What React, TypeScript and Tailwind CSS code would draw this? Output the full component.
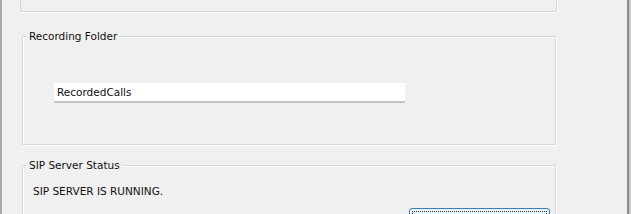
export default function App() {
  return (
    <div className="flex h-[214px] w-[631px] overflow-hidden bg-[#f0f0f0] text-[10.5px] leading-[13px] text-[#111111] [font-family:'DejaVu_Sans',sans-serif]">
      {/* window left edge */}
      <div className="w-[2px] shrink-0 bg-[#a9a9a9]" />

      <div className="flex-1 flex flex-col">
        {/* bottom of the group above */}
        <div className="ml-[18px] h-[12px] w-[537px] shrink-0 border-x border-b border-[#d8d8d8] shadow-[1px_1px_0_#ffffff]" />

        {/* Recording Folder */}
        <div className="relative ml-[20px] mt-[24px] h-[109px] w-[534px] shrink-0 border border-[#d8d8d8] shadow-[inset_1px_1px_0_#ffffff,1px_1px_0_#ffffff]">
          <span className="absolute left-[4px] top-[-7px] bg-[#f0f0f0] px-[2px]">Recording Folder</span>
          <div className="ml-[31px] mt-[46px] flex h-[20px] w-[351px] items-center border-b-2 border-[#c4c4c4] bg-white pl-[3px]">
            RecordedCalls
          </div>
        </div>

        {/* SIP Server Status */}
        <div className="relative ml-[20px] mt-[20px] h-[80px] w-[534px] shrink-0 border border-[#d8d8d8] shadow-[inset_1px_1px_0_#ffffff,1px_1px_0_#ffffff]">
          <span className="absolute left-[4px] top-[-7px] bg-[#f0f0f0] px-[2px]">SIP Server Status</span>
          <div className="ml-[10px] mt-[19px]">SIP SERVER IS RUNNING.</div>
          <div className="ml-[386px] mt-[10px] h-[23px] w-[141px] rounded-[3px] border border-[#3c7fb1] bg-gradient-to-b from-[#eaf6fd] to-[#d9f0fc] p-[2px]">
            <div className="h-full w-full border border-dotted border-[#333333]" />
          </div>
        </div>
      </div>

      {/* window right edge */}
      <div className="flex w-[4px] shrink-0">
        <div className="w-[2px] bg-[#8c8c8c]" />
        <div className="w-[2px] bg-[#c8c8c8]" />
      </div>
    </div>
  )
}
